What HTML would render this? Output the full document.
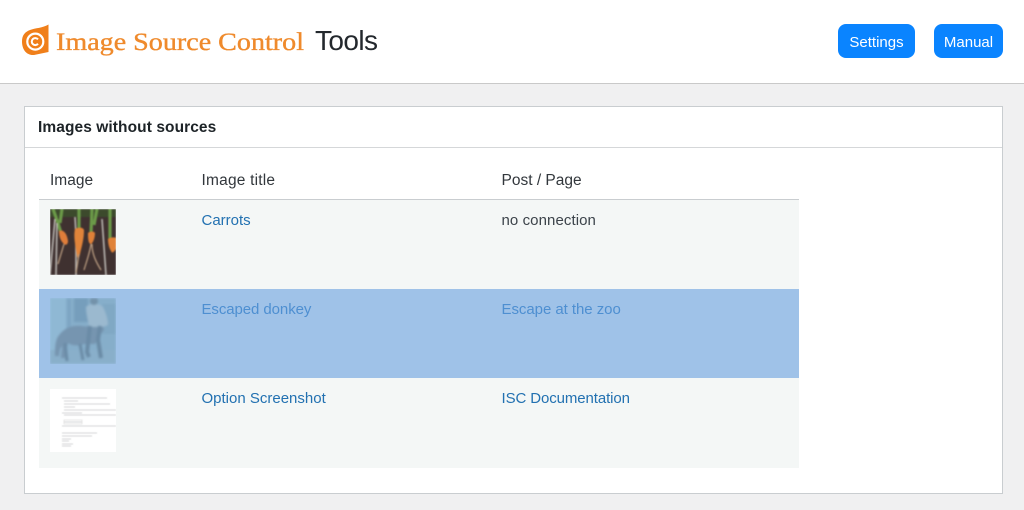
<!DOCTYPE html>
<html><head><meta charset="utf-8"><style>
html,body{margin:0;padding:0;width:1024px;height:510px;overflow:hidden;background:#f0f0f1;font-family:"Liberation Sans",sans-serif}
.a{position:absolute;white-space:nowrap}
.head{left:0;top:0;width:1024px;height:83px;background:#fff;border-bottom:1px solid #c9c9c9}
.btn{background:#0a84ff;color:#fff;border-radius:8px;height:34px;line-height:37px;text-align:center;font-size:15px;top:24px}
.box{left:24px;top:106px;width:977px;height:386px;background:#fff;border:1px solid #c9cdd0}
.line{left:25px;top:147px;width:977px;height:1px;background:#d5d7d9}
.t{font-size:15px;color:#3c434a;line-height:20px}
.h{font-size:15.5px;color:#32373c;line-height:20px}
.l{color:#2271b1}
.row{left:39px;width:760px;height:89px}
</style></head><body>
<div class="a head"></div>
<svg class="a" style="left:20px;top:23px" width="32" height="34" viewBox="0 0 32 34">
<path d="M28.5 1.5 L28.5 29 L14 32 C6 32.5 2 26 2 18.5 C2 12 5 9 10 7 C15 5 23 5 28.5 1.5Z" fill="#f07f1a"/>
<circle cx="15.3" cy="18.6" r="8" fill="none" stroke="#fff" stroke-width="2.2"/>
<path d="M18 16.4 A3.5 3.5 0 1 0 18 20.8" fill="none" stroke="#fff" stroke-width="2"/>
</svg>
<svg class="a" style="left:56px;top:24px" width="250" height="36"><text x="0" y="26" font-family="Liberation Serif,serif" font-size="25" fill="#ef8a2c" stroke="#ef8a2c" stroke-width=".35" textLength="248" lengthAdjust="spacingAndGlyphs">Image Source Control</text></svg>
<div class="a" style="left:315px;top:24px;font-size:28px;line-height:34px;color:#23282d;letter-spacing:-.6px">Tools</div>
<div class="a btn" style="left:838px;width:77px">Settings</div>
<div class="a btn" style="left:934px;width:69px">Manual</div>

<div class="a box"></div>
<div class="a line"></div>
<div class="a" style="left:38px;top:118px;font-size:15.5px;font-weight:700;line-height:20px;color:#1d2327;letter-spacing:.08px">Images without sources</div>

<div class="a h" style="left:50px;top:171px">Image</div>
<div class="a h" style="left:201.5px;top:171px;letter-spacing:.2px">Image title</div>
<div class="a h" style="left:501.5px;top:171px">Post / Page</div>
<div class="a" style="left:39px;top:199px;width:760px;height:1px;background:#c9cdd0"></div>

<div class="a row" style="top:200px;background:#f4f7f6"></div>
<div class="a row" style="top:289px;background:#9fc2e8"></div>
<div class="a row" style="top:378px;height:90px;background:#f4f7f6"></div>

<div class="a" style="left:50px;top:209px;width:66px;height:66px;overflow:hidden">
<svg width="66" height="66" viewBox="0 0 66 66" style="filter:blur(.7px);display:block">
<rect width="66" height="66" fill="#3f3130"/>
<rect width="66" height="8" fill="#3c4a2c"/>
<path d="M3 0l5 14 3 10M12 0l-2 14M29 0v22M42 0l-1 24M47 0l-3 16M60 0v30" stroke="#6b9a48" stroke-width="3.2" fill="none"/>
<path d="M5 10L0 66M7 14L6 66M25 8L26 26M26 30V66M52 10L56 66" stroke="#cfcdc8" stroke-width="1.6" opacity=".85"/>
<path d="M9 22c4-2 8 2 9 10 0 4-3 5-5 2-3-3-4-8-4-12Z" fill="#df7d3a"/>
<path d="M25 20c3-2 8-2 9 1 0 9-2 15-4 24-1 4-2 6-3 2-1-8-4-19-2-27Z" fill="#e2843a"/>
<path d="M38 24c2-2 6-2 7 0 0 5-2 10-4 11-3 0-3-7-3-11Z" fill="#df8038"/>
<path d="M58 30c2-2 7-2 8-1v11c-2 3-4 5-5 2-2-3-3-8-3-12Z" fill="#e08238"/>
<path d="M29 45l-3 19M41 35c-1 8-4 16-7 26M42 35c0 10 4 18 9 26M14 35l-6 20" stroke="#bfa184" stroke-width="1.2" fill="none"/>
</svg></div>

<div class="a" style="left:50px;top:298px;width:66px;height:66px;overflow:hidden">
<svg width="66" height="66" viewBox="0 0 66 66" style="filter:blur(1px);display:block">
<rect width="66" height="66" fill="#86aeca"/>
<rect width="16" height="66" fill="#8fb8d4"/>
<rect x="17" width="4" height="38" fill="#7ea6c4"/>
<rect x="24" width="14" height="24" fill="#769ebc"/>
<rect x="52" y="6" width="14" height="30" fill="#80a8c4"/>
<rect y="52" width="66" height="14" fill="#89afca"/>
<path d="M10 36c5-6 12-9 22-8 7 1 14 0 21-1l1 5c-4 5-7 9-9 14H34c-6 2-11 2-16-1-1 5-3 9-3 15h-4l1-12c-2 3-3 6-3 10H5c0-9 0-17 5-22Z" fill="#7695b0"/>
<path d="M36 9c3-4 14-4 17 0 3 6 5 12 5 18l-5 2H39c-1-7-3-13-3-20Z" fill="#9bb9cf"/>
<circle cx="44" cy="3" r="4" fill="#7392aa"/>
<path d="M40 28l-3 26 2 5M50 28l-2 14 3 18" stroke="#6a8ba6" stroke-width="4" fill="none"/>
<path d="M15 45l2 18M30 46l3 16" stroke="#6a8ba6" stroke-width="3" fill="none"/>
</svg></div>

<div class="a" style="left:50px;top:389px;width:66px;height:63px;background:#fff;overflow:hidden">
<svg width="66" height="63" viewBox="0 0 66 63" style="filter:blur(.6px);display:block">
<g stroke="#a0a4a8" stroke-width=".8" opacity=".6">
<path d="M12 9h45M14 12h14M14 15h46M14 18h11M14 21h52M12 24h20M14 26h52M14 33h18M12 37h54M12 44h35M12 47h30M12 50h9M12 52h7M12 55h11M12 57h9"/>
</g>
<rect x="14" y="31" width="18" height="4" fill="none" stroke="#d8d8d8" stroke-width=".6"/>
</svg></div>

<div class="a t l" style="left:201.5px;top:211px">Carrots</div>
<div class="a t" style="left:501.5px;top:211px;letter-spacing:.08px">no connection</div>
<div class="a t" style="left:201.5px;top:300px;color:#4e8fd1;letter-spacing:-.08px">Escaped donkey</div>
<div class="a t" style="left:501.5px;top:300px;color:#4e8fd1;letter-spacing:-.05px">Escape at the zoo</div>
<div class="a t l" style="left:201.5px;top:389px">Option Screenshot</div>
<div class="a t l" style="left:501.5px;top:389px;letter-spacing:-.1px">ISC Documentation</div>
</body></html>
